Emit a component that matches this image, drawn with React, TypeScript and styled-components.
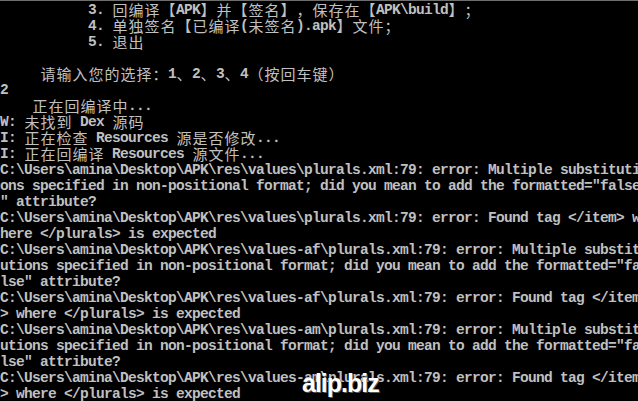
import React from 'react';
import styled, { createGlobalStyle } from 'styled-components';

const GlobalStyle = createGlobalStyle`
    html, body {
        margin: 0;
        padding: 0;
        background: #000;
        overflow: hidden;
    }
`

const Console = styled.div`
    position: relative;
    width: 638px;
    height: 401px;
    box-sizing: border-box;
    border-top: 1px solid #6e6e6e;
    padding-top: 1px;
    background: #000;
    color: #c0c0c0;
    overflow: hidden;
`

const Line = styled.div`
    height: 16px;
    line-height: 16px;
    white-space: pre;
    font-family: "Liberation Mono", "DejaVu Sans Mono", monospace;
    font-size: 14.5px;
    letter-spacing: -0.7px;
    font-weight: bold;
`

const Wide = styled.span`
    display: inline-block;
    width: 16px;
    height: 16px;
    line-height: 16px;
    text-align: center;
    vertical-align: top;
    letter-spacing: 0;
    font-family: "Noto Sans CJK SC", "Noto Sans", sans-serif;
    font-size: 15px;
    font-weight: 400;
`

const Watermark = styled.div`
    position: absolute;
    left: 302px;
    top: 368px;
    font-family: "Liberation Sans", Arial, sans-serif;
    font-size: 25px;
    font-weight: bold;
    letter-spacing: -1px;
    color: #fff;
    text-shadow: 1px 1px 0 #555;
`

const lines = [
    '           3. 回编译【APK】并【签名】，保存在【APK\\build】；',
    '           4. 单独签名【已编译(未签名).apk】文件；',
    '           5. 退出',
    '',
    '     请输入您的选择：1、2、3、4（按回车键）',
    '2',
    '    正在回编译中...',
    'W: 未找到 Dex 源码',
    'I: 正在检查 Resources 源是否修改...',
    'I: 正在回编译 Resources 源文件...',
    'C:\\Users\\amina\\Desktop\\APK\\res\\values\\plurals.xml:79: error: Multiple substituti',
    'ons specified in non-positional format; did you mean to add the formatted="false',
    '" attribute?',
    'C:\\Users\\amina\\Desktop\\APK\\res\\values\\plurals.xml:79: error: Found tag </item> w',
    'here </plurals> is expected',
    'C:\\Users\\amina\\Desktop\\APK\\res\\values-af\\plurals.xml:79: error: Multiple substit',
    'utions specified in non-positional format; did you mean to add the formatted="fa',
    'lse" attribute?',
    'C:\\Users\\amina\\Desktop\\APK\\res\\values-af\\plurals.xml:79: error: Found tag </item',
    '> where </plurals> is expected',
    'C:\\Users\\amina\\Desktop\\APK\\res\\values-am\\plurals.xml:79: error: Multiple substit',
    'utions specified in non-positional format; did you mean to add the formatted="fa',
    'lse" attribute?',
    'C:\\Users\\amina\\Desktop\\APK\\res\\values-am\\plurals.xml:79: error: Found tag </item',
    '> where </plurals> is expected',
]

const wideChar = /[\u2E80-\u9FFF\u3000-\u303F\uFF00-\uFFEF]/

// full-width chars take two console cells
const renderLine = (text: string) => {
    const out: React.ReactNode[] = []
    let narrow = ''
    Array.from(text).forEach((ch, i) => {
        if (wideChar.test(ch)) {
            if (narrow) { out.push(narrow); narrow = '' }
            out.push(<Wide key={i}>{ch}</Wide>)
        } else {
            narrow += ch
        }
    })
    if (narrow) out.push(narrow)
    return out
}

export default function App() {
    return (
        <>
            <GlobalStyle />
            <Console>
                {lines.map((l, i) => (
                    <Line key={i}>{l ? renderLine(l) : ' '}</Line>
                ))}
                <Watermark>alip.biz</Watermark>
            </Console>
        </>
    )
}
